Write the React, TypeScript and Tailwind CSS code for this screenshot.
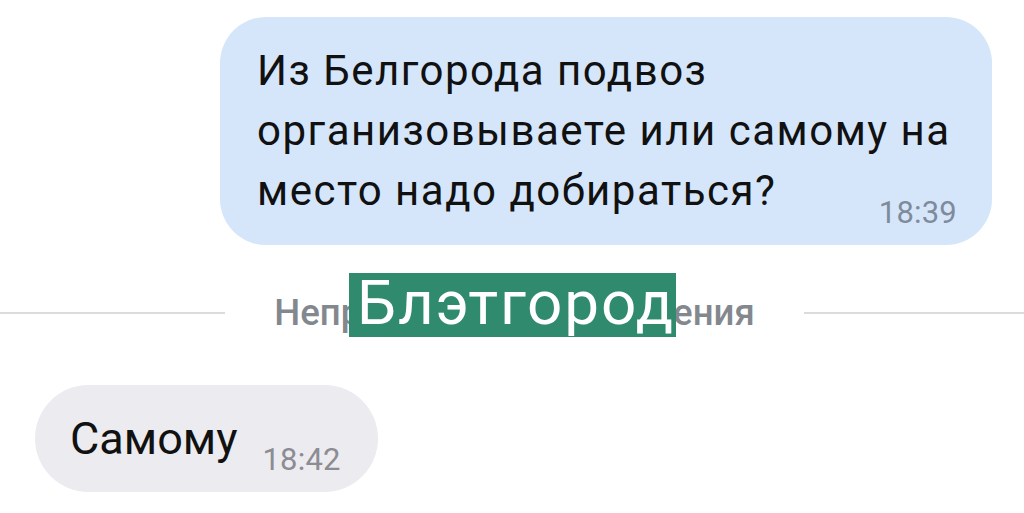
export default function App() {
  return (
    <main className="relative w-[1024px] h-[513px] overflow-hidden bg-white font-['Roboto',sans-serif]">
      {/* Outgoing message */}
      <div className="flex justify-end pt-[17px] pr-[32px]">
        <div className="w-[772px] h-[228px] rounded-[46px] bg-[#d5e6fb] pl-[37px] pr-[35px] pt-[24px] pb-[17px] flex flex-col justify-between">
          <div className="whitespace-nowrap text-[42px] leading-[60px] tracking-[1.5px] text-[#111111]">
            Из Белгорода подвоз
            <br />
            организовываете или самому на
            <br />
            место надо добираться?
          </div>
          <div className="self-end -mt-[40px] text-[31px] leading-none tracking-[0.2px] text-[#7f8b9b]">18:39</div>
        </div>
      </div>

      {/* Unread divider */}
      <div className="relative flex items-center mt-[28px] h-[80px]">
        <div className="w-[225px] h-[2px] bg-[#dcdcdc]" />
        <div className="flex-1 text-center whitespace-nowrap text-[36.6px] font-medium text-[#83888f]">Непрочитанные сообщения</div>
        <div className="w-[220px] h-[2px] bg-[#dcdcdc]" />
        <div className="absolute left-[349px] top-0 w-[327px] h-[64px] bg-[#2f8a6e] flex items-center pl-[8px] pb-[5px]">
          <span className="text-[62px] leading-none tracking-[1.8px] text-white">Блэтгород</span>
        </div>
      </div>

      {/* Incoming message */}
      <div className="pl-[35px] mt-[32px]">
        <div className="inline-flex h-[107px] rounded-full bg-[#ebebf0] pl-[35px] pr-[37px] pb-[17px]">
          <span className="self-end mb-[14px] text-[45px] leading-none text-[#111111]">Самому</span>
          <span className="self-end ml-[25px] text-[31px] leading-none tracking-[0.2px] text-[#8c8c92]">18:42</span>
        </div>
      </div>
    </main>
  );
}
